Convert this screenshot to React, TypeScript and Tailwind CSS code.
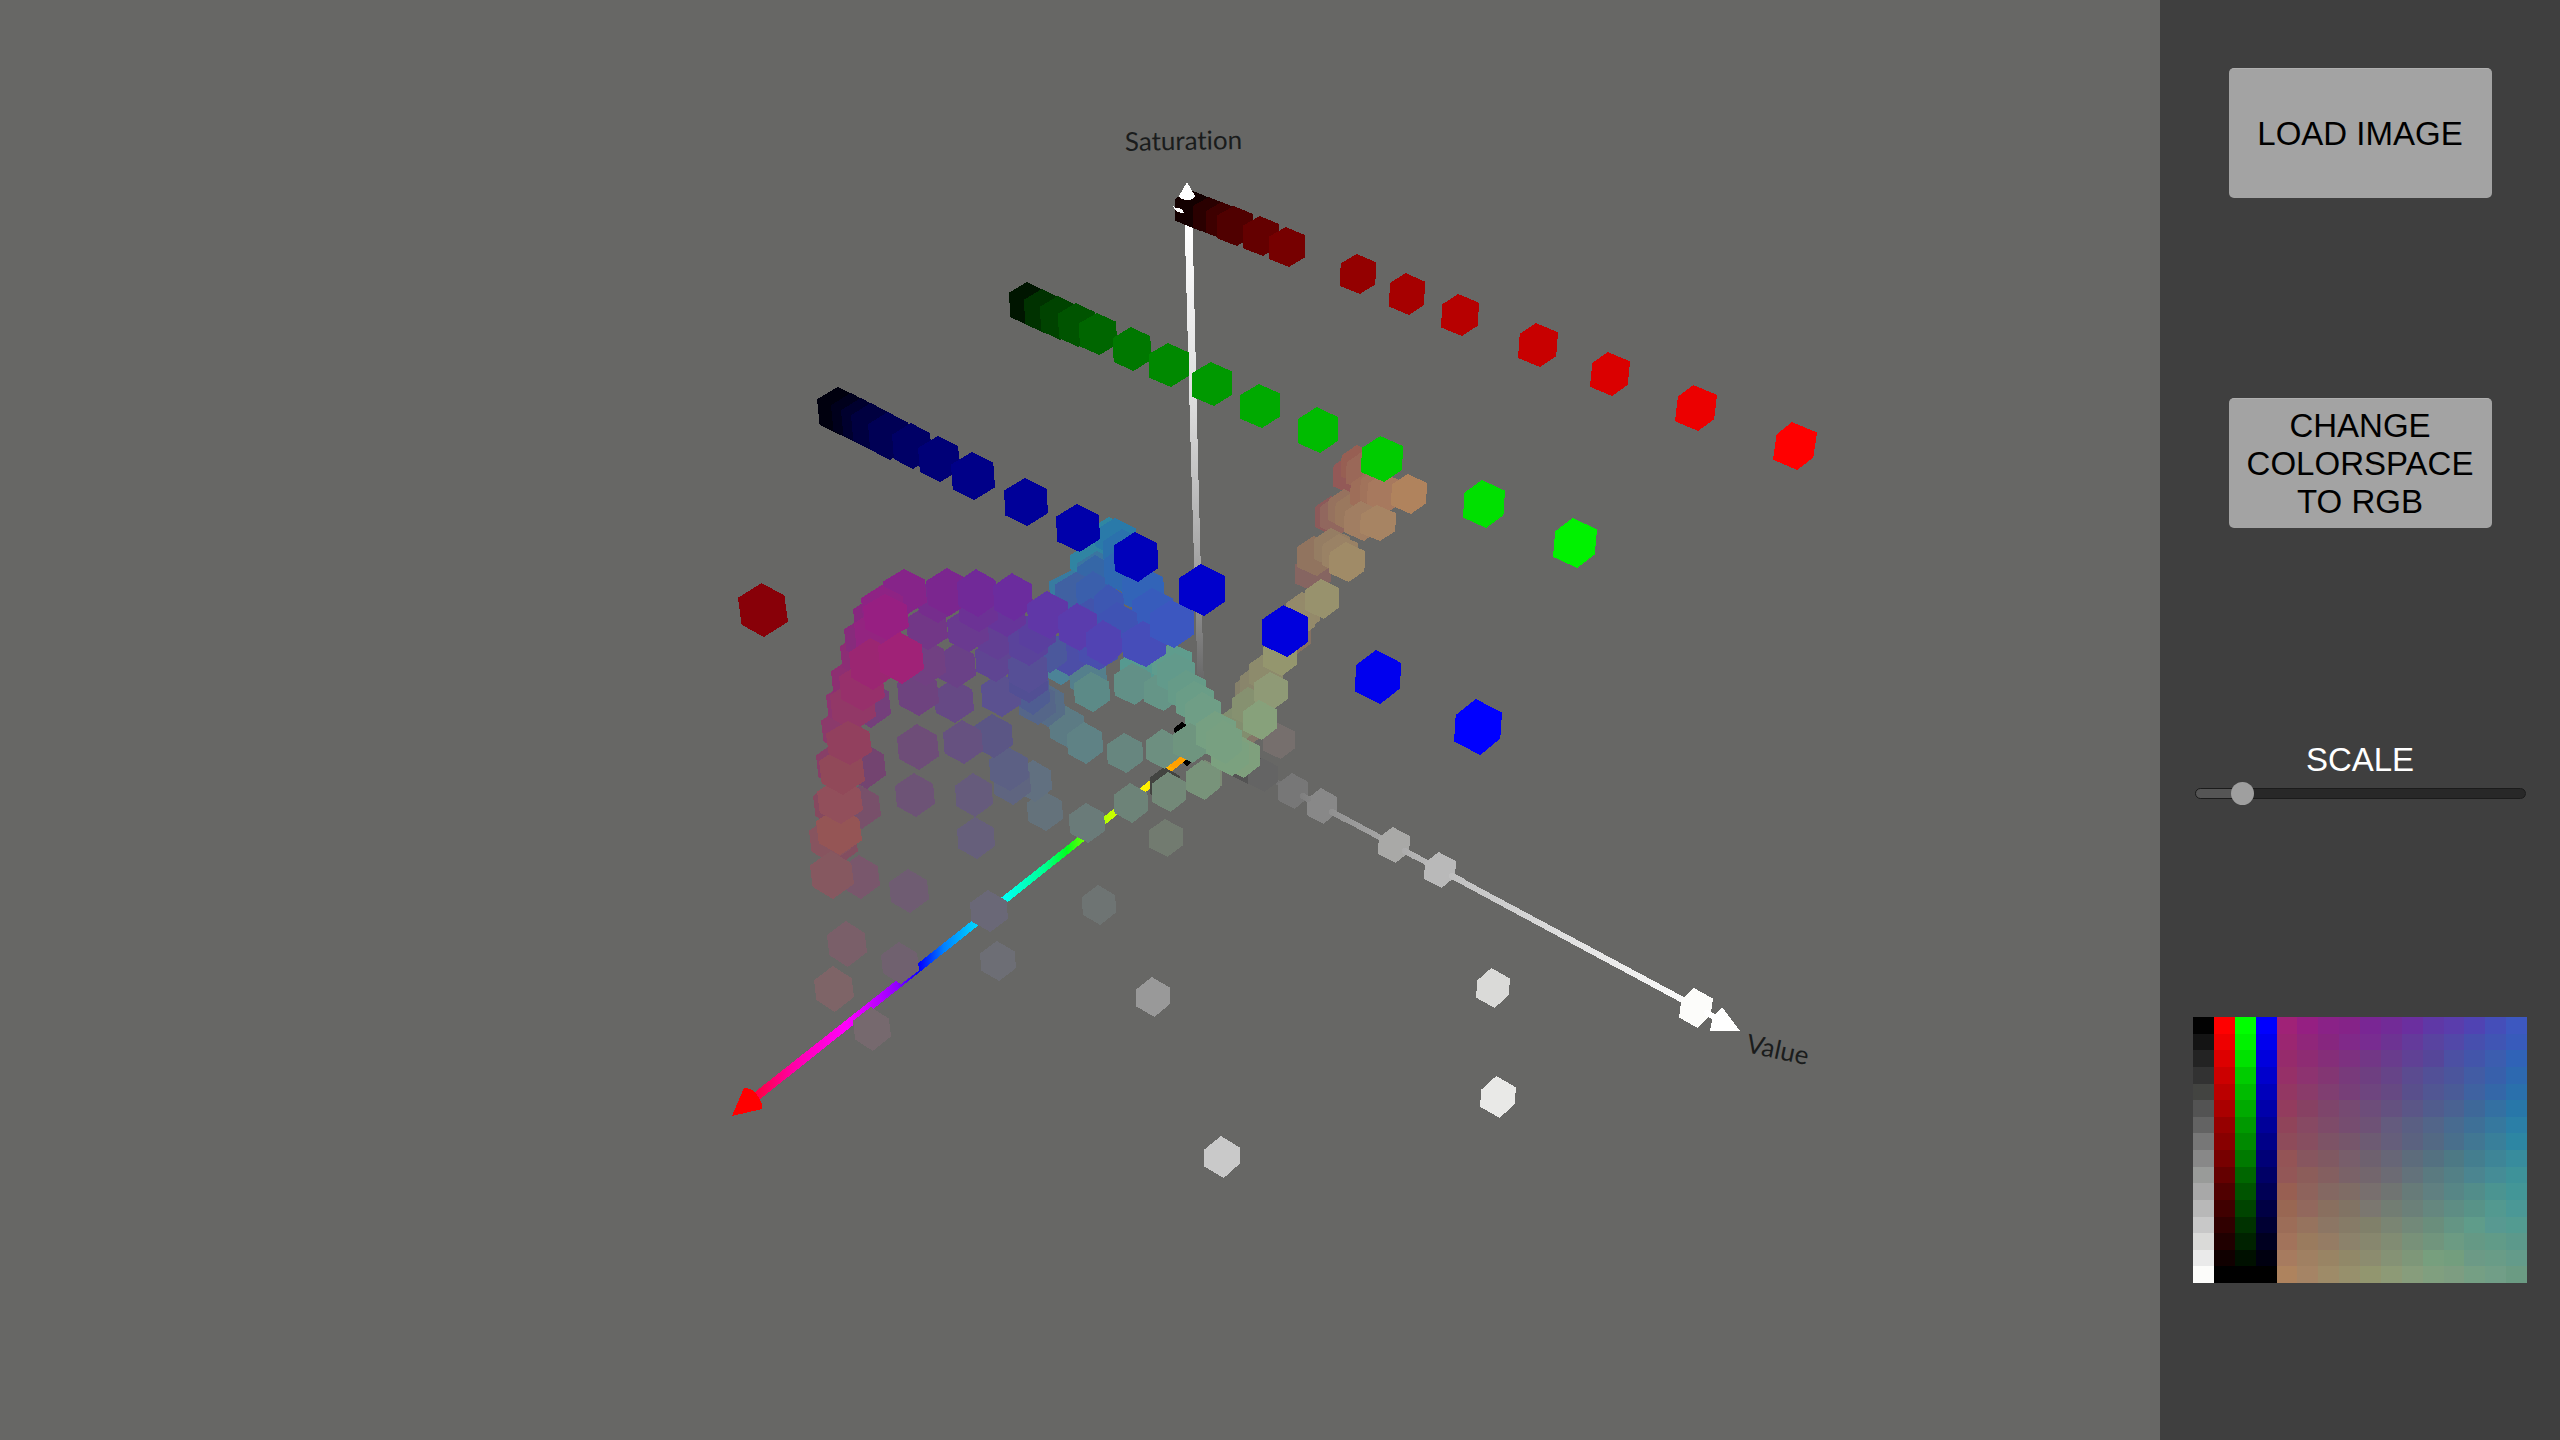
import { useState, type CSSProperties } from "react";

/* x, y, half width, half height, colour; listed from the farthest to the nearest */
type Cube = [number, number, number, number, string];

const redCubes: Cube[] = [
  [1199, 212, 17, 19, "#200000"],
  [1192, 209, 17, 19, "#130000"],
  [1210, 216, 17, 19, "#2a0000"],
  [1223, 221, 17, 19, "#3e0000"],
  [1235, 226, 18, 20, "#500000"],
  [1261, 236, 18, 20, "#640000"],
  [1287, 247, 18, 20, "#760000"],
  [1358, 274, 18, 20, "#940000"],
  [1407, 294, 18, 21, "#a60000"],
  [1460, 315, 19, 21, "#b70000"],
  [1538, 345, 20, 22, "#c80000"],
  [1610, 374, 20, 22, "#da0000"],
  [1696, 408, 21, 23, "#ec0000"],
  [1795, 446, 22, 24, "#ff0000"],
  [763, 610, 25, 27, "#880008"],
];

const greenCubes: Cube[] = [
  [1028, 304, 19, 22, "#001500"],
  [1043, 311, 19, 22, "#003200"],
  [1059, 318, 19, 22, "#004300"],
  [1077, 325, 19, 22, "#005400"],
  [1098, 334, 19, 21, "#006600"],
  [1132, 349, 19, 22, "#007800"],
  [1169, 365, 20, 22, "#008900"],
  [1212, 384, 20, 22, "#009900"],
  [1260, 406, 20, 22, "#00aa00"],
  [1318, 430, 20, 23, "#00bb00"],
  [1382, 459, 21, 23, "#00cc00"],
  [1484, 504, 21, 24, "#00e000"],
  [1575, 543, 22, 25, "#00f200"],
];

const blueCubes: Cube[] = [
  [839, 411, 22, 24, "#00000e"],
  [852, 417, 21, 24, "#00001c"],
  [862, 422, 21, 24, "#00002e"],
  [872, 427, 21, 24, "#000040"],
  [889, 436, 21, 24, "#000055"],
  [912, 446, 20, 23, "#000066"],
  [939, 459, 21, 23, "#000077"],
  [973, 476, 22, 24, "#000088"],
  [1026, 502, 22, 24, "#000099"],
  [1078, 528, 22, 24, "#0000aa"],
  [1136, 557, 22, 25, "#0000bb"],
  [1202, 590, 23, 26, "#0000cc"],
  [1285, 631, 23, 26, "#0000dd"],
  [1378, 677, 23, 27, "#0000ee"],
  [1478, 727, 24, 28, "#0000ff"],
];

const greyCubes: Cube[] = [
  [1165, 785, 15, 18, "#434441"],
  [1247, 767, 15, 17, "#545454"],
  [1263, 775, 15, 17, "#646464"],
  [1293, 791, 15, 18, "#777777"],
  [1322, 806, 15, 18, "#888888"],
  [1394, 845, 16, 18, "#a9a9a7"],
  [1440, 870, 16, 18, "#b9b9b9"],
  [1493, 988, 17, 20, "#dadad8"],
  [1696, 1008, 17, 20, "#fcfcfa"],
  [1498, 1097, 18, 21, "#e9e9e7"],
  [1153, 997, 17, 20, "#999999"],
  [1222, 1157, 18, 21, "#c9c9c9"],
];

const warmCubes: Cube[] = [
  [1350, 475, 17, 20, "#935957"],
  [1358, 465, 17, 20, "#975f53"],
  [1363, 472, 17, 20, "#9a6858"],
  [1332, 516, 17, 20, "#8c5a5a"],
  [1337, 516, 17, 20, "#91675e"],
  [1345, 509, 17, 20, "#96725e"],
  [1352, 513, 17, 20, "#9a785e"],
  [1367, 493, 17, 20, "#9e6e59"],
  [1377, 489, 17, 20, "#a1735b"],
  [1385, 493, 18, 20, "#a7795e"],
  [1362, 521, 18, 20, "#a17e62"],
  [1378, 523, 18, 18, "#a78463"],
  [1409, 494, 18, 20, "#b0835d"],
  [1313, 573, 18, 19, "#866561"],
  [1315, 556, 18, 20, "#91745f"],
  [1332, 548, 18, 20, "#957d63"],
  [1340, 554, 18, 20, "#9a8265"],
  [1347, 562, 18, 20, "#a08b67"],
  [1294, 635, 17, 20, "#857062"],
  [1303, 612, 17, 20, "#94896a"],
  [1298, 618, 17, 20, "#948a6a"],
  [1322, 599, 17, 20, "#98926d"],
  [1279, 741, 16, 18, "#766f6d"],
  [1245, 728, 17, 20, "#847768"],
  [1252, 692, 17, 20, "#85806a"],
  [1257, 685, 17, 20, "#89856b"],
  [1266, 673, 17, 20, "#8d8b6c"],
  [1280, 656, 17, 20, "#94966e"],
  [1234, 727, 17, 20, "#828e6f"],
  [1249, 707, 17, 20, "#869170"],
  [1271, 691, 17, 19, "#8f9a76"],
  [1260, 720, 17, 20, "#87a17b"],
];

const tealCubes: Cube[] = [
  [1067, 727, 18, 21, "#5c7b84"],
  [1060, 663, 20, 22, "#4c8397"],
  [1085, 743, 18, 21, "#5f8285"],
  [1088, 677, 19, 21, "#547f8c"],
  [1092, 692, 18, 20, "#5c8a87"],
  [1139, 669, 19, 20, "#569990"],
  [1133, 684, 19, 21, "#629087"],
  [1162, 691, 18, 20, "#659587"],
  [1172, 663, 20, 20, "#5f9c8d"],
  [1176, 674, 19, 21, "#629a8b"],
  [1187, 691, 19, 21, "#669b88"],
  [1195, 702, 19, 21, "#6a9d87"],
  [1203, 713, 18, 21, "#6f9e86"],
  [1125, 753, 18, 20, "#67867f"],
  [1163, 749, 17, 20, "#6d8f80"],
  [1191, 743, 18, 20, "#6f957f"],
  [1206, 778, 16, 18, "#7b8a75"],
  [1242, 757, 18, 21, "#7fa07d"],
  [1230, 755, 19, 21, "#7ba17f"],
  [1216, 733, 20, 22, "#76a082"],
  [1224, 742, 18, 22, "#78a081"],
  [1203, 780, 17, 20, "#78937a"],
  [1169, 792, 17, 20, "#738978"],
  [1131, 803, 17, 20, "#6d8378"],
  [1087, 823, 18, 20, "#6a7b79"],
  [1166, 838, 17, 19, "#727b70"],
  [1099, 905, 17, 20, "#6e7473"],
];

const azureCubes: Cube[] = [
  [1110, 538, 20, 21, "#2f87a2"],
  [1116, 541, 21, 23, "#2a7aa9"],
  [1090, 566, 20, 23, "#3084a2"],
  [1098, 574, 21, 23, "#3a75a0"],
  [1073, 591, 24, 21, "#387ba0"],
  [1123, 552, 20, 23, "#2b71ac"],
  [1096, 578, 19, 23, "#3567a7"],
  [1077, 595, 22, 23, "#4061a2"],
  [1094, 594, 18, 23, "#3a5fac"],
  [1124, 570, 20, 24, "#2f69b1"],
  [1092, 622, 22, 24, "#4254ac"],
  [1143, 590, 21, 24, "#3264b8"],
  [1109, 606, 15, 22, "#3d57b2"],
  [1153, 611, 21, 23, "#375cbc"],
  [1118, 626, 20, 24, "#3f53b4"],
];

const violetCubes: Cube[] = [
  [909, 891, 20, 22, "#6f5c72"],
  [860, 877, 20, 22, "#79576c"],
  [847, 944, 20, 23, "#7a5f69"],
  [834, 989, 20, 23, "#7e6467"],
  [976, 838, 19, 21, "#665f7b"],
  [974, 795, 19, 22, "#665b7c"],
  [1045, 811, 18, 20, "#64727b"],
  [1034, 781, 18, 21, "#617080"],
  [1012, 783, 19, 22, "#5f6580"],
  [1009, 769, 20, 22, "#5c6084"],
  [993, 736, 20, 22, "#5b5685"],
  [963, 742, 20, 22, "#665180"],
  [915, 795, 20, 22, "#6d5376"],
  [918, 747, 21, 23, "#6e4d78"],
  [1047, 705, 18, 22, "#566d87"],
  [1037, 703, 19, 22, "#556689"],
  [1032, 692, 18, 23, "#4f5d92"],
  [1068, 653, 20, 23, "#4c4ea7"],
  [1098, 650, 20, 20, "#494eae"],
  [1049, 652, 18, 21, "#4b589c"],
  [1001, 695, 20, 22, "#5b5190"],
  [1028, 680, 20, 23, "#524f94"],
  [954, 701, 20, 22, "#664985"],
  [918, 693, 21, 23, "#6e437f"],
  [870, 704, 21, 24, "#743f7b"],
  [866, 766, 20, 23, "#734470"],
  [861, 807, 20, 22, "#78506a"],
  [956, 666, 20, 22, "#6a4187"],
  [925, 662, 21, 24, "#714082"],
  [995, 660, 20, 22, "#5f4592"],
  [1028, 670, 20, 23, "#564f96"],
  [927, 628, 21, 22, "#723787"],
  [997, 638, 20, 22, "#623f94"],
  [968, 630, 21, 22, "#6a3a90"],
  [1028, 643, 20, 23, "#5a439b"],
  [1037, 632, 19, 22, "#5a3f9f"],
  [1006, 614, 20, 23, "#66359a"],
  [978, 610, 20, 22, "#6c3295"],
  [937, 600, 20, 23, "#762d8d"],
  [838, 843, 20, 22, "#834e60"],
  [830, 840, 21, 23, "#87545f"],
  [833, 805, 20, 22, "#86495f"],
  [836, 765, 20, 23, "#873f67"],
  [842, 730, 21, 22, "#8b3a6b"],
  [847, 705, 21, 22, "#8c3570"],
  [852, 682, 21, 24, "#8d2f72"],
  [861, 656, 21, 22, "#8c2d75"],
  [865, 639, 21, 22, "#872b7c"],
  [874, 619, 21, 22, "#87287f"],
  [948, 592, 22, 24, "#7b268f"],
  [905, 592, 22, 23, "#862489"],
  [883, 609, 22, 24, "#8e2384"],
  [977, 593, 20, 24, "#712998"],
  [1013, 597, 20, 24, "#6b2c9e"],
  [876, 634, 22, 24, "#932480"],
  [1048, 615, 21, 24, "#6037a7"],
  [1078, 627, 20, 24, "#5a3cad"],
  [1104, 643, 18, 23, "#5143b3"],
  [1144, 644, 22, 23, "#464db9"],
  [1172, 624, 22, 24, "#3c57c0"],
  [886, 617, 23, 23, "#971f82"],
  [853, 706, 23, 25, "#923867"],
  [862, 687, 23, 24, "#97306b"],
  [872, 664, 23, 26, "#9b2672"],
  [901, 658, 23, 26, "#a02277"],
  [832, 875, 22, 24, "#865860"],
  [839, 831, 23, 24, "#955555"],
  [840, 801, 23, 23, "#924f5b"],
  [842, 771, 23, 24, "#914959"],
  [849, 743, 23, 22, "#92405e"],
];

const hueAxisCubes: Cube[] = [
  [900, 963, 19, 21, "#70616f"],
  [872, 1029, 19, 22, "#76696e"],
  [989, 911, 19, 21, "#6a6877"],
  [998, 961, 18, 20, "#6d6e75"],
];

function CubeShape({ cube }: { cube: Cube }) {
  const [x, y, w, h, fill] = cube;
  const lean = (x - 1240) * 0.0003;
  const inTop = Math.min(0, lean);
  const inBottom = Math.max(0, lean);
  const drop = y - 275;
  const corners = [
    [-0.06 - inBottom / 2, -1],
    [1 + inTop, -0.59 + drop * 0.00016],
    [1 - inBottom, 0.52 - drop * 0.00024],
    [0.1 + inTop / 2, 1],
    [-1 - inTop, 0.6 - drop * 0.00017],
    [-1 + inBottom, -0.52 + drop * 0.0002],
  ];
  const points = corners.map(([cx, cy]) => `${x + cx * w},${y + cy * h}`).join(" ");
  return <polygon points={points} fill={fill} />;
}

function CubeGroup({ cubes }: { cubes: Cube[] }) {
  return (
    <g>
      {cubes.map((cube, i) => (
        <CubeShape key={i} cube={cube} />
      ))}
    </g>
  );
}

function Plot() {
  return (
    <svg
      viewBox="0 0 2160 1440"
      className="block h-screen w-full"
      role="img"
      aria-label="Colours plotted by hue, saturation and value"
    >
      <defs>
        <linearGradient id="saturation" gradientUnits="userSpaceOnUse" x1="0" y1="226" x2="0" y2="690">
          <stop offset="0" stopColor="#ffffff" />
          <stop offset="0.4" stopColor="#dadada" />
          <stop offset="0.7" stopColor="#a8a8a8" />
          <stop offset="1" stopColor="#636363" />
        </linearGradient>
        <linearGradient id="value" gradientUnits="userSpaceOnUse" x1="1260" y1="0" x2="1710" y2="0">
          <stop offset="0" stopColor="#686868" />
          <stop offset="0.16" stopColor="#919191" />
          <stop offset="0.4" stopColor="#bcbcbc" />
          <stop offset="0.7" stopColor="#e2e2e2" />
          <stop offset="1" stopColor="#ffffff" />
        </linearGradient>
        <linearGradient id="hue" gradientUnits="userSpaceOnUse" x1="750" y1="0" x2="1190" y2="0">
          <stop offset="0" stopColor="#ff0030" />
          <stop offset="0.1" stopColor="#ff00a8" />
          <stop offset="0.22" stopColor="#ff00ff" />
          <stop offset="0.335" stopColor="#9000ff" />
          <stop offset="0.385" stopColor="#0000ff" />
          <stop offset="0.44" stopColor="#0080ff" />
          <stop offset="0.51" stopColor="#00d0ff" />
          <stop offset="0.58" stopColor="#00fff4" />
          <stop offset="0.67" stopColor="#00ff90" />
          <stop offset="0.72" stopColor="#00ff20" />
          <stop offset="0.76" stopColor="#70ff00" />
          <stop offset="0.82" stopColor="#c4ff00" />
          <stop offset="0.9" stopColor="#fff200" />
          <stop offset="0.96" stopColor="#ffa800" />
          <stop offset="1" stopColor="#ff9000" />
        </linearGradient>
      </defs>

      <g shapeRendering="crispEdges">
        <polygon points="1184,200 1192,200 1198,460 1204,690 1198,690 1191,460" fill="url(#saturation)" />
        <polygon points="1271,776 1710,1011 1710,1018 1271,782" fill="url(#value)" />
        <polygon points="1174,728 1182,722 1187,725 1175,736" fill="#000000" />
        <polygon points="1182,762 1190,758 1191,762 1187,767" fill="#000000" />
        <polygon points="755,1092 1182,755 1187,758 1181,764 759,1100" fill="url(#hue)" />
        <CubeGroup cubes={greyCubes} />
        <polygon points="1169,766 1182,755 1187,758 1181,764 1174,768" fill="#ffa000" />
        <g stroke="url(#value)" strokeWidth="6" strokeLinecap="round">
          <path d="M1303 796 1308 799M1332 812 1345 819M1405 851 1414 856M1452 876 1462 881M1707 1013 1714 1017" />
        </g>
        <CubeGroup cubes={redCubes} />
        <CubeGroup cubes={warmCubes} />
        <CubeGroup cubes={greenCubes} />
        <CubeGroup cubes={tealCubes} />
        <CubeGroup cubes={azureCubes} />
        <CubeGroup cubes={violetCubes} />
        <CubeGroup cubes={hueAxisCubes} />
        <CubeGroup cubes={blueCubes} />

        <path d="M1187 182 1195 196Q1193 200 1187 200T1179 196Z" fill="#ffffff" />
        <path d="M1173 206 1176 208Q1182 207 1184 213 1178 213 1175 210Z" fill="#ffffff" />
        <polygon points="1740,1031 1710,1031 1713,1016 1722,1007" fill="#ffffff" />
        <path d="M732 1116 744 1088Q754 1088 759 1098L762 1104V1109Z" fill="#ff0000" />
      </g>

      <g className="[font-variant-ligatures:none]" fill="#1a1c1c" fontFamily="Lato, sans-serif" fontSize="26">
        <text x="1125" y="151" transform="rotate(-1 1125 151)">
          Saturation
        </text>
        <text x="1745" y="1052" transform="rotate(12 1745 1052)">
          Value
        </text>
      </g>
    </svg>
  );
}

const swatches = `
020202 ff0000 00ff00 0000ff a02277 951f82 8a2287 852388 792694 722b97 6b2f9f 5f38a6 5a3dac 5043b3 454eb9 3d58c0
141414 ee0000 00f200 0000ee 9b2671 90267a 87267f 802989 782c91 6d3393 643a9b 5943a0 5248a8 474fae 4055b4 385bbb
232323 dd0000 00e200 0000dd 962b6c 8e2c73 852e79 7d3180 723786 693c8d 604195 564699 4c50a3 4355aa 3c5daf 3063b7
323232 cc0000 00cc00 0000cc 963068 8d3370 833673 783a7b 6e3f81 664488 5b4b90 525097 4b559c 425ca4 3860ab 2d69b0
434441 bb0000 00bb00 0000bb 933763 8a3b6a 803e71 773f78 6e457f 664983 594f8c 515693 4a5b97 3f62a1 3467a8 2a70ac
535353 aa0000 00aa00 0000aa 933c5e 874163 7e456b 764a72 6d4d7a 645180 5b5687 515c8d 4a6292 3e6899 3470a2 2877a9
636363 960000 009900 000099 90445a 874963 7e4b69 764d70 6e5276 645b7e 5a5f83 526589 486b90 3e7097 36789e 2b7fa7
777777 880000 008a00 000088 8e4b5a 874e60 7d5366 76566b 6d5b73 655e7b 5b6280 536984 496f8c 417793 397f9a 2d86a3
888888 770000 007a00 000077 945456 87565f 805962 785e6b 6e616f 676677 5d6c7c 547181 4d7985 447e8f 3e8597 388c9d
999b99 640000 006600 000066 935757 8c5d5a 845f60 7a6268 73666d 6c6b74 63727b 5a7a80 538086 4b8590 458c96 3e9299
a8a8a8 500000 005400 000055 985f52 8e635c 846862 7f6c65 786f6e 707472 677b79 608081 578686 528d8a 4b9491 439697
b8b8b8 400000 004400 000044 996753 92685d 896f5f 817364 7b7770 727d73 6b8079 65877f 5e8d84 589388 539990 4b9896
c8c8c8 300000 003200 000033 9c6d58 96735e 8c7664 867b67 80806a 7a8573 728979 6a8e7c 649584 5f9c8a 589991 539b91
dadad8 200000 002200 000020 a2735b 9a7b5e 957c64 8c826b 87876e 818c73 789179 71957d 6c9b83 659985 619b88 5c998b
eaeaea 100000 001000 000010 a77b5f a08062 998464 918868 8c8c6f 859275 7e9779 779f7e 739e7e 6c9a86 699c87 649b8a
fcfcfa 000000 000000 000000 ae835e a58465 9e8b68 97906c 92966f 8d9a76 879d7c 809f7f 7d9d81 759f84 719e87 6b9b83
`
  .trim()
  .split(/\s+/);

function SourceImage() {
  return (
    <div
      role="img"
      aria-label="Loaded image"
      className="grid h-[266px] w-[334px] [grid-template-columns:repeat(16,minmax(0,1fr))] [grid-template-rows:repeat(16,minmax(0,1fr))]"
    >
      {swatches.map((hex, i) => (
        <div key={i} style={{ backgroundColor: `#${hex}` }} />
      ))}
    </div>
  );
}

const buttonClass =
  "flex h-[130px] w-[263px] shrink-0 items-center justify-center rounded-[5px] border-t border-[#b0b0b0] bg-[#a3a3a3] px-3 text-center text-[33px] leading-[38px] text-black";

export default function App() {
  const [scale, setScale] = useState(116);
  const fill = { "--fill": `${12 + (scale / 1000) * 308}px` } as CSSProperties;

  return (
    <div className="flex min-h-screen bg-[#676765] font-['Liberation_Sans',Arial,sans-serif]">
      <main className="min-w-0 flex-1">
        <Plot />
      </main>
      <aside className="flex w-[400px] shrink-0 flex-col items-center bg-[#3f3f3f] pt-[68px]">
        <button type="button" className={buttonClass}>
          LOAD IMAGE
        </button>
        <button type="button" className={`${buttonClass} mt-[200px]`}>
          CHANGE COLORSPACE TO RGB
        </button>
        <label htmlFor="scale" className="mt-[213px] text-[33px] leading-[38px] text-white">
          SCALE
        </label>
        <input
          id="scale"
          type="range"
          min={0}
          max={1000}
          value={scale}
          onChange={(e) => setScale(Number(e.target.value))}
          style={fill}
          className="mt-[3px] h-[23px] w-[331px] cursor-pointer appearance-none bg-transparent [&::-webkit-slider-runnable-track]:h-[11px] [&::-webkit-slider-runnable-track]:rounded-full [&::-webkit-slider-runnable-track]:border [&::-webkit-slider-runnable-track]:border-[#1b1b1b] [&::-webkit-slider-runnable-track]:bg-[linear-gradient(to_right,#555555_var(--fill),#282828_var(--fill))] [&::-webkit-slider-thumb]:mt-[-7px] [&::-webkit-slider-thumb]:size-[23px] [&::-webkit-slider-thumb]:appearance-none [&::-webkit-slider-thumb]:rounded-full [&::-webkit-slider-thumb]:bg-[#9f9f9f]"
        />
        <div className="mt-[212px]">
          <SourceImage />
        </div>
      </aside>
    </div>
  );
}
